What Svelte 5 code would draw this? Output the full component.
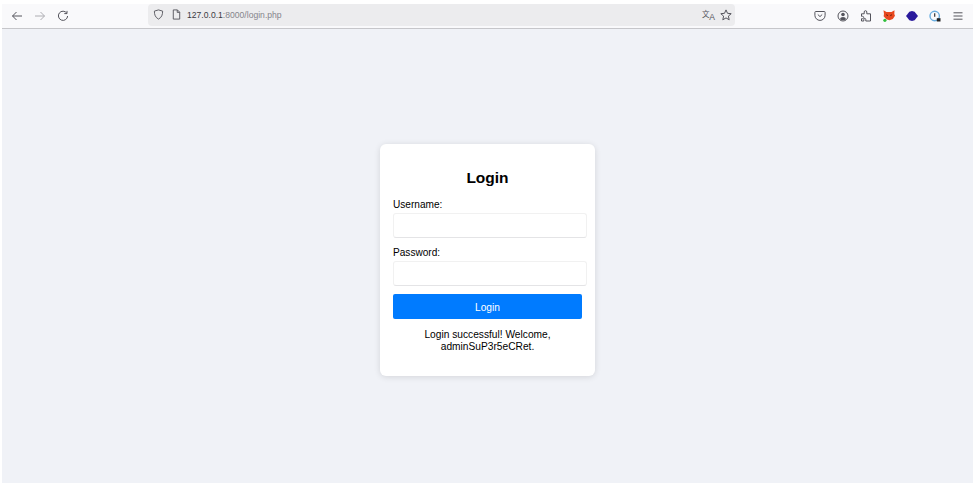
<script>
	let username = $state('');
	let password = $state('');
	const message = 'Login successful! Welcome, adminSuP3r5eCRet.';
</script>

<div class="window">
	<header class="toolbar">
		<nav class="nav">
			<svg class="icon" viewBox="0 0 12 12"><path d="M11 6H1.500M5.500 2 1.500 6l4 4" class="line" /></svg>
			<svg class="icon dim" viewBox="0 0 12 12"><path d="M1 6h9.500M6.500 2l4 4-4 4" class="line" /></svg>
			<svg class="icon" viewBox="0 0 12 12"><path d="M9.800 3.200A4.600 4.600 0 1 0 10.600 6M10 .9v2.700H7.300" class="line" /></svg>
		</nav>
		<div class="urlbar">
			<svg class="small shield" viewBox="0 0 12 12"><path d="M6 1 1.500 2.300c0 4 1 6.900 4.500 8.700 3.500-1.800 4.500-4.700 4.500-8.700z" class="line" /></svg>
			<svg class="small doc" viewBox="0 0 12 12"><path d="M2.500 1h4.500l2.500 2.500V11h-7zM6.800 1v2.700h2.700" class="line" /></svg>
			<span class="url">127.0.0.1<span class="faded">:8000/login.php</span></span>
			<span class="grow"></span>
			<span class="translate"><span class="zh">文</span><span class="en">A</span></span>
			<svg class="icon star" viewBox="0 0 12 12"><path d="M6 .9 7.500 4.300l3.700.4-2.800 2.400.8 3.700L6 8.900l-3.200 1.900.8-3.700L.8 4.700l3.700-.4z" class="line" /></svg>
		</div>
		<div class="extensions">
			<svg class="icon" viewBox="0 0 12 12"><path d="M1.700 1.500h8.600q.8 0 .8.800v3a5.100 5.100 0 0 1-10.200 0v-3q0-.8.800-.8zM3.800 4.500 6 6.600l2.200-2.100" class="line" /></svg>
			<svg class="icon" viewBox="0 0 12 12"><circle cx="6" cy="6" r="5" class="line" /><circle cx="6" cy="4.500" r="1.800" class="solid" /><path d="M2.800 9.200Q3.500 7 6 7t3.200 2.200Q6 11.300 2.800 9.200z" class="solid" /></svg>
			<svg class="icon" viewBox="0 0 12 12"><path d="M1.500 3.800h2.700V2a1.300 1.300 0 0 1 2.600 0v1.800h3.700v7.200H5.800V9.500a1 1 0 0 0-2 0V11H1.500V8.700h1a1.200 1.200 0 0 0 0-2.400h-1z" class="line" /></svg>
			<svg class="icon" viewBox="0 0 12 12">
				<path d="M.5.300 3.500 2h5L11.500.3l-.2 3.700.7 1.700-2.200 3.300-3.300 1.300-3.200-1L.6 6.200 1 4z" fill="#e8481f" />
				<path d="M3.300 4.800l1.600.7M8.900 4.800l-1.600.7" stroke="#5a1c0c" stroke-width="1" />
				<circle cx="1.900" cy="10.300" r="1.600" fill="#2fbf3c" />
			</svg>
			<svg class="icon" viewBox="0 0 12 12"><path d="M6 1 8.600 1.800 10 3.500 12 6l-2 2.500-1.400 1.700L6 11l-2.600-.8L2 8.500 0 6l2-2.500 1.400-1.700z" fill="#2a1a9c" /></svg>
			<svg class="icon" viewBox="0 0 12 12">
				<circle cx="5.700" cy="6" r="4.700" fill="none" stroke="#6aaee0" stroke-width="1.400" />
				<path d="M5.700 3.200v3.600" stroke="#333" stroke-width="1.200" />
				<rect x="7.800" y="8.200" width="3.700" height="3.300" fill="#222" />
			</svg>
			<svg class="icon" viewBox="0 0 12 12"><path d="M1.500 2.800h9M1.500 6h9M1.500 9.200h9" class="line" /></svg>
		</div>
	</header>

	<main class="page">
		<section class="card">
			<h2>Login</h2>
			<form onsubmit={(e) => e.preventDefault()}>
				<label for="username">Username:</label>
				<input id="username" type="text" bind:value={username} />
				<label for="password">Password:</label>
				<input id="password" type="password" bind:value={password} />
				<button type="submit">Login</button>
			</form>
			<p>{message}</p>
		</section>
	</main>
</div>

<style>
	:global(body) {
		background: #fff;
	}

	.window {
		height: 483px;
		box-sizing: border-box;
		padding: 4px 2px 0;
		display: flex;
		flex-direction: column;
		overflow: hidden;
		font-family: "Liberation Sans", Arial, sans-serif;
	}

	/* ---- browser toolbar ---- */
	.toolbar {
		height: 24px;
		flex: none;
		display: flex;
		align-items: center;
		background: #f9f9fb;
		border-bottom: 1px solid #c6c6ca;
	}

	.nav {
		display: flex;
		gap: 11px;
		padding-left: 9px;
		width: 146px;
		box-sizing: border-box;
	}

	.icon {
		width: 12px;
		height: 12px;
		flex: none;
	}

	.line {
		fill: none;
		stroke: #54545c;
		stroke-width: 1;
	}

	.solid {
		fill: #54545c;
	}

	.dim {
		opacity: 0.45;
	}

	.urlbar {
		width: 587px;
		height: 22px;
		margin-top: -3px;
		flex: none;
		display: flex;
		align-items: center;
		background: #ececee;
		border-radius: 4px;
		box-sizing: border-box;
		padding: 0 2px 0 5px;
	}

	.small {
		width: 11px;
		height: 11px;
		flex: none;
	}

	.doc {
		margin-left: 7px;
	}

	.url {
		margin-left: 5px;
		font-size: 8.6px;
		color: #3a3a42;
	}

	.faded {
		color: #85858c;
	}

	.grow {
		flex: 1;
	}

	.translate {
		position: relative;
		width: 13px;
		height: 12px;
		margin-right: 5px;
		color: #54545c;
	}

	.zh {
		position: absolute;
		left: 0;
		top: -1px;
		font-size: 7.5px;
		font-family: "Noto Sans CJK SC", sans-serif;
	}

	.en {
		position: absolute;
		right: 0;
		bottom: -1px;
		font-size: 8.5px;
	}

	.star {
		margin-right: 1px;
	}

	.extensions {
		display: flex;
		gap: 11px;
		margin-left: 79px;
	}

	/* ---- login page ---- */
	main.page {
		flex: 1;
		display: flex;
		align-items: center;
		justify-content: center;
		padding-top: 8px;
		background: #f0f2f7;
	}

	.card {
		width: 215px;
		height: 232px;
		box-sizing: border-box;
		padding: 13px;
		background: #fff;
		border-radius: 6px;
		box-shadow: 0 1px 6px rgba(0, 0, 0, 0.12);
		color: #000;
	}

	h2 {
		margin: 11px 0 12px;
		font-size: 15.5px;
		line-height: 19px;
		text-align: center;
		font-weight: bold;
	}

	form {
		display: flex;
		flex-direction: column;
		align-items: flex-start;
	}

	label {
		font-size: 10.1px;
		line-height: 12px;
		margin-bottom: 2px;
	}

	input {
		width: 193.5px;
		height: 25px;
		box-sizing: border-box;
		margin-bottom: 9px;
		border: 1px solid #f1f1f1;
		border-bottom-color: #e4e4e6;
		border-radius: 3px;
		background: #fff;
		padding: 0 5px;
	}

	input:last-of-type {
		margin-bottom: 8px;
	}

	button {
		width: 189px;
		height: 25px;
		border: none;
		border-radius: 2px;
		padding: 1px 0 0;
		background: #007bff;
		color: #fff;
		font: 10.2px "Liberation Sans", Arial, sans-serif;
	}

	p {
		margin: 10px 0 0;
		font-size: 10.2px;
		line-height: 12px;
		text-align: center;
	}
</style>
